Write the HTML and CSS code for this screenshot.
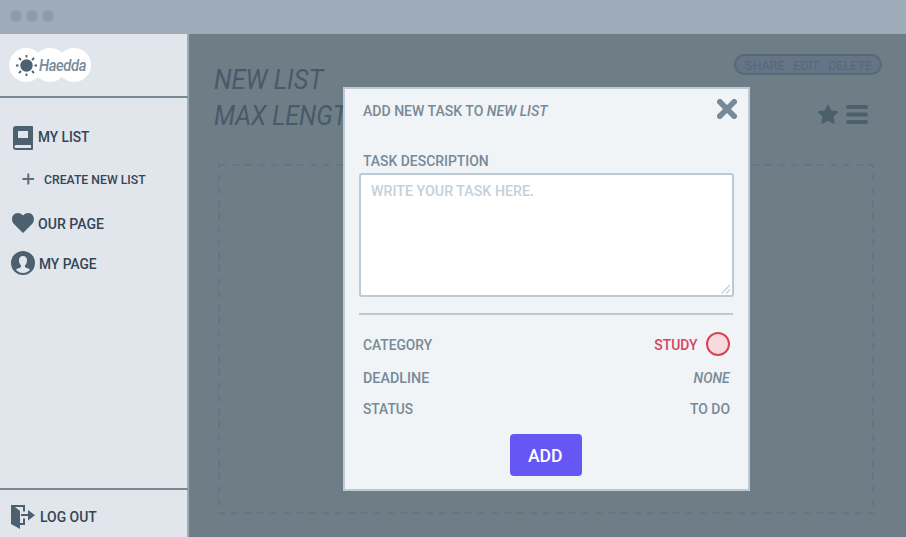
FILE: index.html
```html
<!DOCTYPE html>
<html lang="en">
<head>
<meta charset="utf-8">
<title>Haedda</title>
<link rel="stylesheet" href="styles.css">
</head>
<body>
<div class="window">
  <header class="titlebar"><i class="dot"></i><i class="dot"></i><i class="dot"></i></header>
  <div class="body">
    <aside class="sidebar">
      <div class="brand">
        <svg class="brand-art" width="84" height="36" viewBox="0 0 84 36">
          <g fill="#fff"><circle cx="18" cy="18" r="17"/><circle cx="42" cy="18" r="17"/><circle cx="66" cy="18" r="17"/></g>
          <circle cx="18.500" cy="18.500" r="6.200" fill="#4c6070"/>
          <g stroke="#4c6070" stroke-width="1.800"><path d="M18.500 8v2.500M18.500 26.500V29M8 18.500h2.500M26.500 18.500H29M11 11l2 2M24 24l2 2M11 26l2-2M24 13l2-2"/></g>
        </svg>
        <span class="brand-name">Haedda</span>
      </div>
      <nav class="nav">
        <a class="item list"><svg width="20" height="24" viewBox="0 0 20 24"><path fill="#4c6070" fill-rule="evenodd" d="M3 0h16a1 1 0 0 1 1 1v22a1 1 0 0 1-1 1H3a3 3 0 0 1-3-3V3a3 3 0 0 1 3-3zM5 5v7h10V5zM3 19a1.500 1.500 0 0 0 0 3h15v-3z"/></svg><span class="t t-list">MY LIST</span></a>
        <a class="item create"><svg width="12" height="12" viewBox="0 0 12 12"><path d="M6.300 .5v11M.5 6h11.500" stroke="#5c6e7d" stroke-width="2"/></svg><span class="t t-create">CREATE NEW LIST</span></a>
        <a class="item our"><svg width="22" height="20" viewBox="0 0 22 20"><path fill="#4c6070" d="M11 20L1.500 10.500C-3 4 4-4 11 2.500 18-4 25 4 20.500 10.500z"/></svg><span class="t t-our">OUR PAGE</span></a>
        <a class="item me"><svg width="24" height="24" viewBox="0 0 24 24"><circle cx="12" cy="12" r="12" fill="#4c6070"/><path fill="#e1e6ed" d="M12 5C9.400 5 8 6.700 8 9c0 2.500.8 4.300 2 5.300V16c-1 1.200-4 1-5 2.800C7 21 9.500 22 12 22s5-1 7-3.200c-1-1.800-4-1.600-5-2.800v-1.700c1.200-1 2-2.800 2-5.300 0-2.300-1.400-4-4-4z"/></svg><span class="t t-me">MY PAGE</span></a>
      </nav>
      <a class="item logout"><svg width="24" height="24" viewBox="0 0 24 24"><path fill="#4c6070" d="M0 0h14v6.500h-2V2H4l5 4v12h3v-4.500h2V20H9v4L0 19z"/><path fill="#4c6070" d="M10 9h7V5l7 5.200-7 5.300V11h-7z"/></svg><span class="t t-out">LOG OUT</span></a>
    </aside>
    <main class="main">
      <div class="main-head">
        <h1 class="heading"><span class="t h-a">NEW LIST</span><br><span class="t h-b">MAX LENGT</span></h1>
        <div class="tools">
          <div class="pill"><span>SHARE</span><span>EDIT</span><span>DELETE</span></div>
          <div class="icons">
            <svg width="22" height="20" viewBox="0 0 22 20"><path fill="#4c5f6c" stroke="#4c5f6c" stroke-linejoin="round" d="M11 .8l3 6 7 1-5 4.900 1.200 6.800-6.200-3.200-6.200 3.200L6 12.700 1 7.800l7-1z"/></svg>
            <svg width="22" height="19" viewBox="0 0 22 19"><path stroke="#4c5f6c" stroke-width="4" stroke-linecap="round" d="M2 2h18M2 9.500h18M2 17h18"/></svg>
          </div>
        </div>
      </div>
      <svg class="board" width="656" height="350" viewBox="0 0 656 350"><g fill="none" stroke="#657486" stroke-width="2" stroke-dasharray="7 6"><path d="M1 1H656"/><path d="M0 349H656"/><path d="M1 0V350M655 0V350" stroke-dashoffset="3"/></g></svg>
    </main>
  </div>
  <section class="modal">
    <div class="modal-head">
      <span class="t t-title">ADD NEW TASK TO <em>NEW LIST</em></span>
      <svg class="close" width="20" height="20" viewBox="0 0 20 20"><path d="M2.800 2.800l14.400 14.400M17.200 2.800l-14.400 14.400" stroke="#788998" stroke-width="5.600" stroke-linecap="square"/></svg>
    </div>
    <label class="desc"><span class="t t-desc">TASK DESCRIPTION</span></label>
    <div class="field"><span class="t t-ph">WRITE YOUR TASK HERE.</span><svg class="grip" width="10" height="10" viewBox="0 0 10 10"><path d="M.5 9.500l8.500-8.500M5 9.500l4-4" stroke="#c3cbd4" stroke-width="1.200"/></svg></div>
    <div class="row cat"><span class="t t-cat">CATEGORY</span><span class="study"><span class="t t-study">STUDY</span><i class="swatch"></i></span></div>
    <div class="row dead"><span class="t t-dead">DEADLINE</span><em class="t t-none">NONE</em></div>
    <div class="row stat"><span class="t t-stat">STATUS</span><span class="t t-todo">TO DO</span></div>
    <button class="add"><span class="t t-add">ADD</span></button>
  </section>
</div>
</body>
</html>
```
FILE: styles.css
```css
*{box-sizing:border-box}
body{margin:0;font-family:Roboto,"Liberation Sans",sans-serif}
.window{width:906px;height:537px;position:relative;overflow:hidden;display:flex;flex-direction:column}
.titlebar{height:34px;background:#9dacb8;display:flex;gap:4px;padding:10px}
.dot{width:12px;height:12px;border-radius:50%;background:#8d9cac}
.body{flex:1;display:flex}
.t{display:inline-block;transform:scaleX(.91);transform-origin:left center}
.sidebar{width:189px;background:#e1e6ed;border-right:2px solid #9dacb8;display:flex;flex-direction:column;font-weight:500;font-size:15.3px;color:#344554}
.brand{height:64px;border-bottom:2px solid #788998;padding:13px 8px;position:relative;margin-right:-1px}
.brand-art{display:block}
.brand-name{position:absolute;left:39px;top:22px;font-style:italic;font-size:16px;line-height:20px;letter-spacing:-.4px;color:#788998;transform:scaleX(.92);transform-origin:left}
.nav{flex:1;padding-top:26px}
.item{display:flex;align-items:center;line-height:24px;white-space:nowrap}
.item svg{flex:none}
.list{padding-left:13px;gap:5px;height:28px}
.list .t{margin-top:-2px;transform:scaleX(.895)}
.create{padding-left:22px;gap:10px;font-size:13px;height:52px;padding-top:3px}
.create svg{margin-top:-1px}
.t-create{transform:scaleX(.94)}
.our{padding-left:12px;gap:4px;height:37px}
.our .t{margin-top:2px;transform:scaleX(.92)}
.me{padding-left:11px;gap:4px;height:44px}
.me .t{margin-top:1px;transform:scaleX(.9)}
.logout{height:49px;border-top:2px solid #788998;padding:7px 0 0 11px;gap:5px;margin-right:-1px}
.main{flex:1;background:#6f7d87;padding:20px 24px 0 25px}
.main-head{height:110px;display:flex;justify-content:space-between}
.heading{margin:8px 0 0;font-size:27.5px;line-height:36px;font-weight:400;font-style:italic;color:#475a69;white-space:nowrap}
.h-a{transform:scaleX(.925)}
.h-b{transform:scaleX(.905)}
.pill{width:148px;height:21px;border:2px solid #566979;border-radius:11px;background:#657486;color:#566979;font-size:12.5px;line-height:20px;padding:0 8px 0 9px;display:flex;justify-content:space-between;font-weight:400}
.icons{display:flex;gap:7px;justify-content:flex-end;padding:29px 14px 0 0;align-items:center}
.board{display:block;margin-left:4px}
.modal{position:absolute;left:343px;top:87px;width:407px;height:404px;background:#f0f4f7;border:2px solid #bccad5;color:#788998;font-size:15.3px;font-weight:500;padding:0 14px;white-space:nowrap}
.modal-head{height:60px;display:flex;justify-content:space-between;padding:10px 0 0 4px;line-height:24px}
.t-title{transform:scaleX(.918)}
.close{margin-right:-3px}
.desc{display:block;height:24px;line-height:24px;padding-left:4px}
.field{width:375px;height:124px;border:2px solid #bccad5;border-radius:3px;background:#fff;padding:4px 10px;line-height:24px;color:#c5d0da;position:relative}
.t-ph{transform:scaleX(.93)}
.grip{position:absolute;right:1px;bottom:1px}
.row{display:flex;justify-content:space-between;align-items:center;padding:0 4px;height:31px}
.row .t{margin-top:1px}
.cat{border-top:2px solid #bccad5;margin-top:16px;height:47px;padding-top:13px;margin-right:1px;padding-right:3px}
.t-cat{transform:scaleX(.9)}
.dead{height:35px}
.t-dead{transform:scaleX(.935)}
.stat{height:28px}
.stat .t{margin-top:-1px}
.t-stat{transform:scaleX(.9)}
.t-study,.t-none,.t-todo{transform-origin:right center}
.study{display:flex;align-items:center;gap:8px;color:#d5455b}
.swatch{width:24px;height:24px;border:2px solid #d5455b;border-radius:50%;background:#f6dadd}
.add{display:block;width:72px;height:42px;margin:11px auto 0;padding:1px 0 0;border:0;border-radius:4px;background:#6657f5;color:#fff;font:500 18.5px Roboto,sans-serif;position:relative;left:-1px}
.t-add{transform:scaleX(.95);transform-origin:center}
```
